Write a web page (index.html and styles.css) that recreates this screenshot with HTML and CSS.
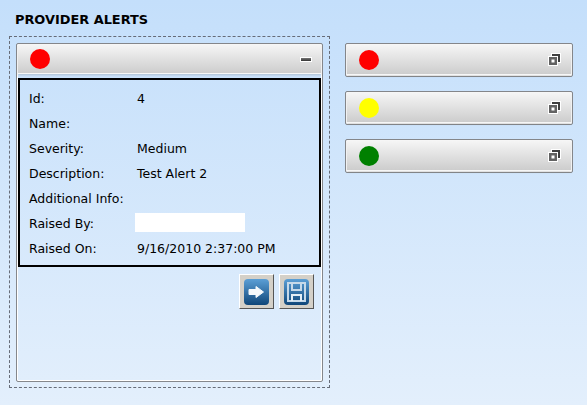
FILE: index.html
```html
<!DOCTYPE html>
<html lang="en">
<head>
    <meta charset="UTF-8">
    <title>Provider Alerts</title>
    <link rel="stylesheet" href="styles.css">
</head>
<body>
    <h1 class="page-title">PROVIDER ALERTS</h1>
    <div class="columns">
        <div class="drop-zone">
            <div class="panel panel-open">
                <div class="panel-header">
                    <span class="dot dot-red"></span>
                    <span class="minimize"></span>
                </div>
                <div class="details">
                    <div class="row"><span class="label">Id:</span><span class="value">4</span></div>
                    <div class="row"><span class="label">Name:</span><span class="value"></span></div>
                    <div class="row"><span class="label">Severity:</span><span class="value">Medium</span></div>
                    <div class="row"><span class="label">Description:</span><span class="value">Test Alert 2</span></div>
                    <div class="row"><span class="label">Additional Info:</span><span class="value"></span></div>
                    <div class="row"><span class="label">Raised By:</span><span class="blank"></span></div>
                    <div class="row"><span class="label">Raised On:</span><span class="value">9/16/2010 2:37:00 PM</span></div>
                </div>
                <div class="actions">
                    <button class="icon-button" aria-label="Next">
                        <svg width="25" height="26" viewBox="0 0 25 26">
                            <defs>
                                <linearGradient id="blue" x1="0" y1="0" x2="0" y2="1">
                                    <stop offset="0" stop-color="#5b9fd6"/>
                                    <stop offset="1" stop-color="#0f4679"/>
                                </linearGradient>
                            </defs>
                            <rect width="25" height="26" rx="4" fill="url(#blue)"/>
                            <path d="M5 10.500h7V7.500l7.500 5.500-7.500 5.500v-3H5z" fill="#f4f8fb" stroke="#f4f8fb" stroke-linejoin="round"/>
                        </svg>
                    </button>
                    <button class="icon-button" aria-label="Save">
                        <svg width="25" height="26" viewBox="0 0 25 26">
                            <rect width="25" height="26" rx="4" fill="url(#blue)"/>
                            <path d="M4 4h17v18H4z" fill="none" stroke="#c6d9e9" stroke-width="2"/>
                            <path d="M8 4v7h9V4" fill="none" stroke="#c6d9e9" stroke-width="2"/>
                            <path d="M8 22v-6h9v6" fill="none" stroke="#e4eef6" stroke-width="2"/>
                        </svg>
                    </button>
                </div>
            </div>
        </div>
        <div class="side">
            <div class="panel">
                <div class="panel-header">
                    <span class="dot dot-red"></span>
                    <svg class="restore" width="13" height="13" viewBox="0 0 13 13">
                        <path d="M3 0h10v10h-3V3H3z" fill="#fff"/>
                        <path d="M4 1h8v8h-2V3H4z" fill="#3f3f3f"/>
                        <path d="M0 3h10v10H0z" fill="#fff"/>
                        <path d="M1 4h8v8H1zM3.500 6.500v3h3v-3z" fill="#626262" fill-rule="evenodd"/>
                    </svg>
                </div>
            </div>
            <div class="panel">
                <div class="panel-header">
                    <span class="dot dot-yellow"></span>
                    <svg class="restore" width="13" height="13" viewBox="0 0 13 13">
                        <path d="M3 0h10v10h-3V3H3z" fill="#fff"/>
                        <path d="M4 1h8v8h-2V3H4z" fill="#3f3f3f"/>
                        <path d="M0 3h10v10H0z" fill="#fff"/>
                        <path d="M1 4h8v8H1zM3.500 6.500v3h3v-3z" fill="#626262" fill-rule="evenodd"/>
                    </svg>
                </div>
            </div>
            <div class="panel">
                <div class="panel-header">
                    <span class="dot dot-green"></span>
                    <svg class="restore" width="13" height="13" viewBox="0 0 13 13">
                        <path d="M3 0h10v10h-3V3H3z" fill="#fff"/>
                        <path d="M4 1h8v8h-2V3H4z" fill="#3f3f3f"/>
                        <path d="M0 3h10v10H0z" fill="#fff"/>
                        <path d="M1 4h8v8H1zM3.500 6.500v3h3v-3z" fill="#626262" fill-rule="evenodd"/>
                    </svg>
                </div>
            </div>
        </div>
    </div>
</body>
</html>
```
FILE: styles.css
```css
body {
    margin: 0;
    height: 405px;
    overflow: hidden;
    padding: 12px 0 0 9px;
    box-sizing: border-box;
    background: linear-gradient(#c4dffb, #e3effc);
    font-family: "DejaVu Sans", sans-serif;
    font-size: 12.5px;
    color: #000;
}

.page-title {
    margin: 0 0 9px 6px;
    font-size: 12.9px;
    line-height: 15px;
    font-weight: bold;
}

.columns {
    display: flex;
    gap: 15px;
    align-items: flex-start;
}

.drop-zone {
    width: 321px;
    height: 352px;
    box-sizing: border-box;
    padding: 6px;
    border: 1px dashed #666c78;
}

.side {
    display: flex;
    flex-direction: column;
    gap: 14px;
    width: 228px;
    margin-top: 7px;
}

.panel {
    box-sizing: border-box;
    border: 1px solid #85878b;
    border-radius: 2px;
    box-shadow: inset 0 0 0 1px #fff;
}

.panel-open {
    width: 307px;
    height: 339px;
}

.panel-header {
    display: flex;
    align-items: center;
    justify-content: space-between;
    height: 29px;
    padding: 0 12px;
    margin: 0 1px 1px;
    border-bottom: 1px solid #f6f6f6;
    border-top: 1px solid #f6f6f6;
    background: linear-gradient(#f5f5f5, #cdcdcd);
    box-shadow: 0 1px 2px rgba(110, 110, 110, 0.3);
}

.panel-open .panel-header {
    height: 28px;
    margin-bottom: 4px;
}

.dot {
    width: 20px;
    height: 20px;
    border-radius: 50%;
}

.dot-red {
    background: #f00;
}

.dot-yellow {
    background: #ff0;
}

.dot-green {
    background: #008000;
}

.minimize {
    width: 10px;
    height: 3px;
    margin-right: -3px;
    border: 1px solid #fff;
    background: linear-gradient(#777, #333);
}

.restore {
    margin-right: -2px;
}

.details {
    height: 189px;
    box-sizing: border-box;
    margin: 0 1px;
    padding: 6px 9px;
    border: 2px solid #000;
}

.row {
    display: flex;
    align-items: center;
    height: 25px;
}

.label {
    width: 108px;
}

.blank {
    align-self: flex-start;
    width: 110px;
    height: 19px;
    margin: 2px 0 0 -2px;
    background: #fff;
}

.actions {
    display: flex;
    justify-content: flex-end;
    gap: 5px;
    margin: 7px 8px 0 0;
}

.icon-button {
    display: flex;
    align-items: center;
    justify-content: center;
    width: 35px;
    height: 35px;
    padding: 0;
    border: 1px solid;
    border-color: #fff #555 #555 #fff;
    background: #d4d0c8;
}
```
